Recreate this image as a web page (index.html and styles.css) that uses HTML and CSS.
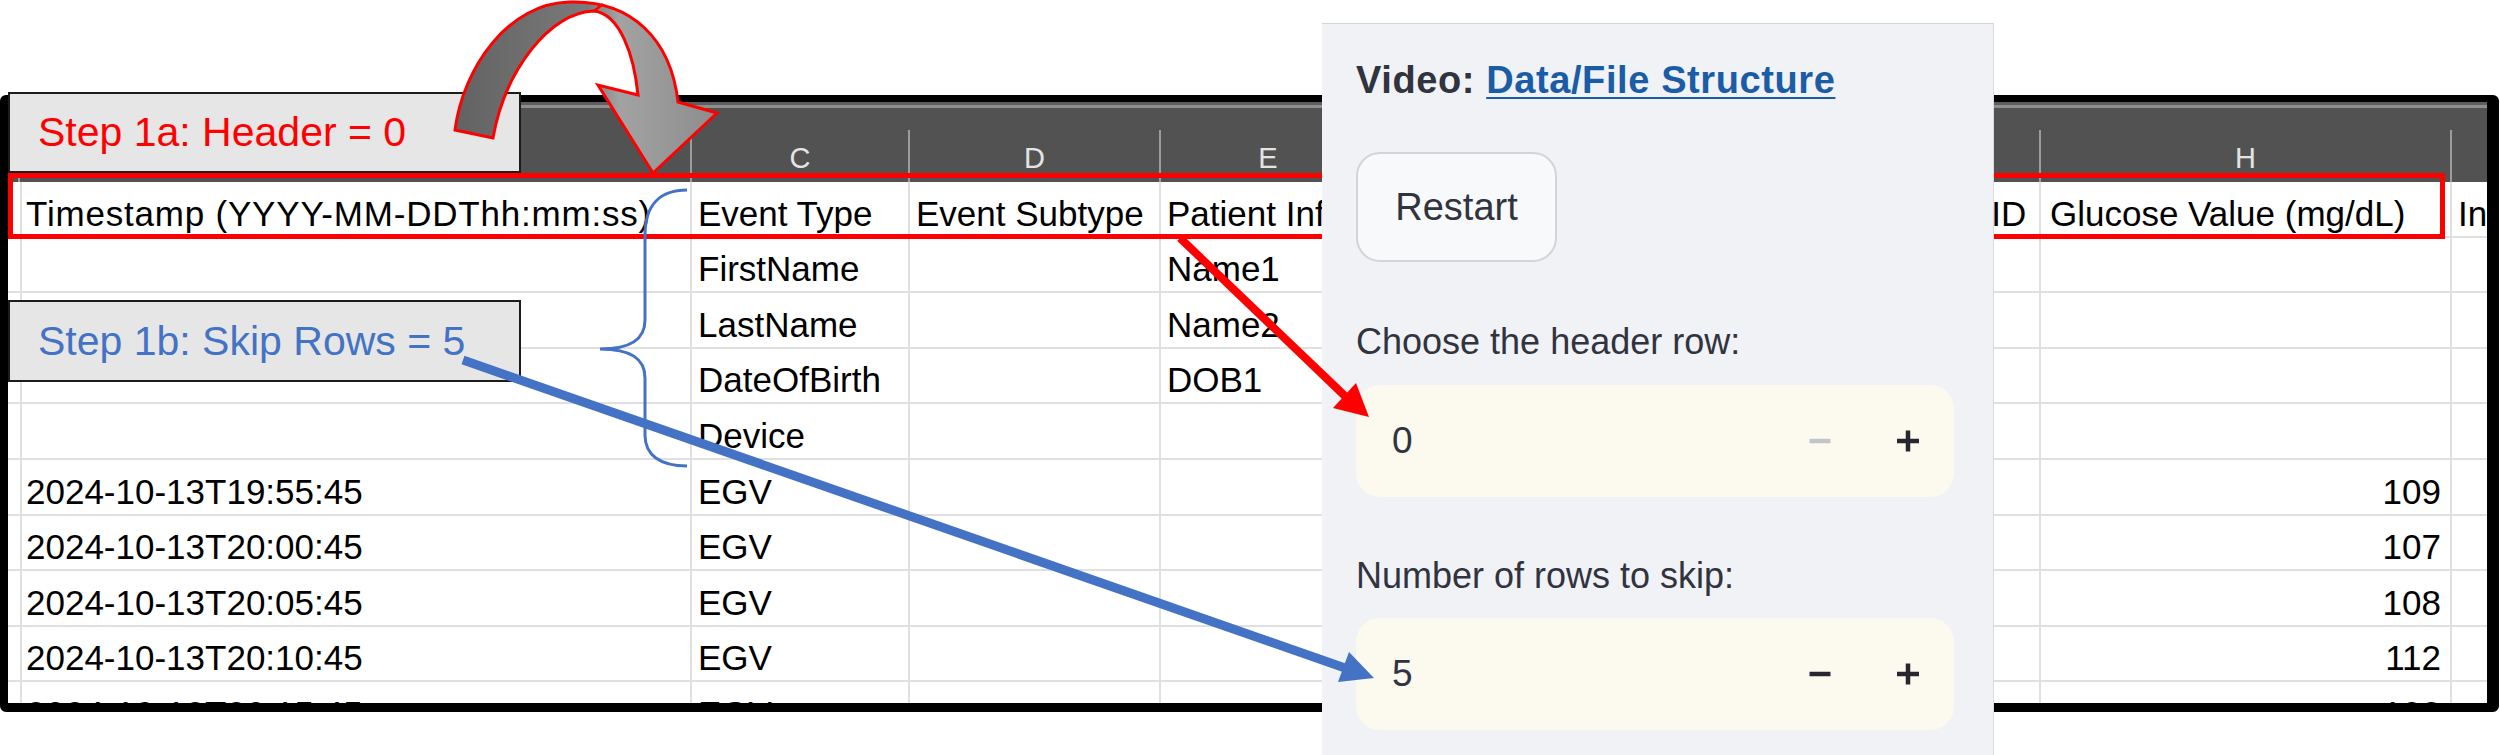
FILE: index.html
```html
<!DOCTYPE html>
<html lang="en">
<head>
<meta charset="utf-8">
<title>Header and skip rows</title>
<link rel="stylesheet" href="styles.css">
</head>
<body>
  <div class="sheet">
    <div class="colbar">
      <div class="col-letter"></div>
      <div class="col-letter">B</div>
      <div class="col-letter">C</div>
      <div class="col-letter">D</div>
      <div class="col-letter">E</div>
      <div class="col-letter">F</div>
      <div class="col-letter">G</div>
      <div class="col-letter">H</div>
      <div class="col-letter">I</div>
    </div>
    <div class="rows">
      <div class="row">
        <div class="cell"></div>
        <div class="cell stamp-head">Timestamp (YYYY-MM-DDThh:mm:ss)</div>
        <div class="cell">Event Type</div>
        <div class="cell">Event Subtype</div>
        <div class="cell">Patient Info</div>
        <div class="cell">Device Info</div>
        <div class="cell">Source Device ID</div>
        <div class="cell head-h">Glucose Value (mg/dL)</div>
        <div class="cell">Insulin Value (u)</div>
      </div>
      <div class="row">
        <div class="cell"></div><div class="cell"></div>
        <div class="cell">FirstName</div><div class="cell"></div>
        <div class="cell">Name1</div><div class="cell"></div><div class="cell"></div>
        <div class="cell num"></div><div class="cell"></div>
      </div>
      <div class="row">
        <div class="cell"></div><div class="cell"></div>
        <div class="cell">LastName</div><div class="cell"></div>
        <div class="cell">Name2</div><div class="cell"></div><div class="cell"></div>
        <div class="cell num"></div><div class="cell"></div>
      </div>
      <div class="row">
        <div class="cell"></div><div class="cell"></div>
        <div class="cell">DateOfBirth</div><div class="cell"></div>
        <div class="cell">DOB1</div><div class="cell"></div><div class="cell"></div>
        <div class="cell num"></div><div class="cell"></div>
      </div>
      <div class="row">
        <div class="cell"></div><div class="cell"></div>
        <div class="cell">Device</div><div class="cell"></div>
        <div class="cell"></div><div class="cell"></div><div class="cell"></div>
        <div class="cell num"></div><div class="cell"></div>
      </div>
      <div class="row">
        <div class="cell"></div><div class="cell">2024-10-13T19:55:45</div>
        <div class="cell">EGV</div><div class="cell"></div>
        <div class="cell"></div><div class="cell"></div><div class="cell"></div>
        <div class="cell num">109</div><div class="cell"></div>
      </div>
      <div class="row">
        <div class="cell"></div><div class="cell">2024-10-13T20:00:45</div>
        <div class="cell">EGV</div><div class="cell"></div>
        <div class="cell"></div><div class="cell"></div><div class="cell"></div>
        <div class="cell num">107</div><div class="cell"></div>
      </div>
      <div class="row">
        <div class="cell"></div><div class="cell">2024-10-13T20:05:45</div>
        <div class="cell">EGV</div><div class="cell"></div>
        <div class="cell"></div><div class="cell"></div><div class="cell"></div>
        <div class="cell num">108</div><div class="cell"></div>
      </div>
      <div class="row">
        <div class="cell"></div><div class="cell">2024-10-13T20:10:45</div>
        <div class="cell">EGV</div><div class="cell"></div>
        <div class="cell"></div><div class="cell"></div><div class="cell"></div>
        <div class="cell num">112</div><div class="cell"></div>
      </div>
      <div class="row">
        <div class="cell"></div><div class="cell">2024-10-13T20:15:45</div>
        <div class="cell">EGV</div><div class="cell"></div>
        <div class="cell"></div><div class="cell"></div><div class="cell"></div>
        <div class="cell num">108</div><div class="cell"></div>
      </div>
    </div>
  </div>

  <div class="header-frame"></div>

  <div class="callout callout-header">Step 1a: Header = 0</div>
  <div class="callout callout-skip">Step 1b: Skip Rows = 5</div>

  <aside class="sidebar">
    <p class="sidebar-title">Video: <a class="video-link" href="#">Data/File Structure</a></p>
    <button class="restart" type="button">Restart</button>

    <label class="field-label">Choose the header row:</label>
    <div class="number-input">
      <span class="number-value">0</span>
      <span class="stepper is-disabled">
        <svg width="24" height="24" viewBox="0 0 24 24"><path d="M1.5 12H22.5" /></svg>
      </span>
      <span class="stepper">
        <svg width="24" height="24" viewBox="0 0 24 24"><path d="M1 12H23M12 1.5V22.5" /></svg>
      </span>
    </div>

    <label class="field-label">Number of rows to skip:</label>
    <div class="number-input">
      <span class="number-value">5</span>
      <span class="stepper">
        <svg width="24" height="24" viewBox="0 0 24 24"><path d="M1.5 12H22.5" /></svg>
      </span>
      <span class="stepper">
        <svg width="24" height="24" viewBox="0 0 24 24"><path d="M1 12H23M12 1.5V22.5" /></svg>
      </span>
    </div>
  </aside>

  <svg class="annotations" width="2500" height="755" viewBox="0 0 2500 755">
    <defs>
      <linearGradient id="ribbon" x1="455" y1="0" x2="720" y2="0" gradientUnits="userSpaceOnUse">
        <stop offset="0" stop-color="#626262"/>
        <stop offset="0.5" stop-color="#7a7a7a"/>
        <stop offset="0.62" stop-color="#a2a2a2"/>
        <stop offset="1" stop-color="#8c8c8c"/>
      </linearGradient>
    </defs>

    <!-- curved arrow pointing at the header row -->
    <path class="curl" d="M455,130 C463,68 508,3 570,2 C632,0 671,40 678,102 L717,113 L653,173 L598,85 L638,95 C634,55 620,14 594,11 C550,12 505,70 493,138 Z"/>
    <path class="curl-seam" d="M594,11 L603,4"/>

    <!-- brace around the rows to skip -->
    <path class="brace" d="M687,190 C660,190 645,205 645,235 L645,320 C645,340 630,349 600,349 C630,349 645,358 645,378 L645,435 C645,455 660,466 687,466"/>

    <!-- header row pointer -->
    <line class="pointer-red" x1="1180" y1="238" x2="1346" y2="397"/>
    <polygon class="head-red" points="1369,417 1333,408 1356,383"/>

    <!-- skip rows pointer -->
    <line class="pointer-blue" x1="463" y1="360" x2="1345" y2="668"/>
    <polygon class="head-blue" points="1374,678 1338,682 1349,652"/>
  </svg>
</body>
</html>
```

FILE: styles.css
```css
html, body {
  margin: 0;
  padding: 0;
}

body {
  position: relative;
  width: 2500px;
  height: 755px;
  overflow: hidden;
  background: #ffffff;
  font-family: "Liberation Sans", Arial, sans-serif;
}

/* ---------- spreadsheet ---------- */

.sheet {
  margin-top: 95px;
  width: 2499px;
  height: 617px;
  box-sizing: border-box;
  border-style: solid;
  border-color: #000000;
  border-width: 7px 12px 9px 8px;
  border-radius: 6px;
  overflow: hidden;
  background: #ffffff;
}

.colbar,
.row {
  display: grid;
  grid-template-columns: 12px 672px 218px 251px 216px 371px 293px 411px 200px;
  width: max-content;
}

.colbar {
  height: 80px;
  align-items: end;
  background: linear-gradient(#5e5e5e 0, #5e5e5e 3px, #8e8e8e 3px, #8e8e8e 6px, #525252 6px);
}

.col-letter {
  height: 52px;
  box-sizing: border-box;
  border-right: 2px solid #9c9c9c;
  display: flex;
  justify-content: center;
  align-items: flex-end;
  padding-bottom: 9px;
  color: #e4e4e4;
  font-size: 29px;
  line-height: 1;
}

.row {
  height: 55.6px;
}

.cell {
  box-sizing: border-box;
  border-right: 2px solid #e0e0e0;
  border-bottom: 2px solid #e0e0e0;
  display: flex;
  align-items: flex-end;
  padding: 0 6px 2px 6px;
  font-size: 35px;
  line-height: 40px;
  color: #000000;
  white-space: nowrap;
}

.cell.stamp-head {
  letter-spacing: 0.8px;
}

.cell.num {
  justify-content: flex-end;
  padding-right: 9px;
}

.cell.head-h {
  padding-left: 9px;
}

/* ---------- annotations ---------- */

.header-frame {
  position: absolute;
  left: 8px;
  top: 173px;
  width: 2437px;
  height: 66px;
  box-sizing: border-box;
  border: 5px solid #ff0000;
  z-index: 1;
}

.callout {
  position: absolute;
  left: 8px;
  width: 513px;
  box-sizing: border-box;
  background: #e6e6e6;
  border: 2px solid #1c1c1c;
  display: flex;
  align-items: center;
  padding-left: 28px;
  font-size: 41px;
  white-space: nowrap;
  z-index: 2;
}

.callout-header {
  top: 92px;
  height: 81px;
  color: #ff0000;
}

.callout-skip {
  top: 300px;
  height: 82px;
  color: #4472c4;
}

.annotations {
  position: absolute;
  left: 0;
  top: 0;
  z-index: 4;
  pointer-events: none;
}

.curl {
  fill: url(#ribbon);
  stroke: #ff0000;
  stroke-width: 3;
  stroke-linejoin: miter;
}

.curl-seam {
  stroke: #ff0000;
  stroke-width: 2.5;
  fill: none;
}

.brace {
  fill: none;
  stroke: #4472c4;
  stroke-width: 3;
}

.pointer-red {
  stroke: #ff0000;
  stroke-width: 8;
}

.head-red {
  fill: #ff0000;
}

.pointer-blue {
  stroke: #4472c4;
  stroke-width: 9;
}

.head-blue {
  fill: #4472c4;
}

/* ---------- settings sidebar ---------- */

.sidebar {
  position: absolute;
  left: 1322px;
  top: 23px;
  width: 672px;
  height: 740px;
  box-sizing: border-box;
  padding: 33px 0 0 34px;
  background: #f0f2f6;
  border-top: 1px solid #d4d5d9;
  border-right: 1px solid #dadbdf;
  display: flex;
  flex-direction: column;
  align-items: flex-start;
  color: #31333f;
  z-index: 3;
}

.sidebar-title {
  margin: 0;
  font-size: 38px;
  line-height: 46px;
  font-weight: 700;
  letter-spacing: 0.6px;
  white-space: nowrap;
}

.video-link {
  color: #1a5ca6;
  text-decoration: underline;
  text-decoration-thickness: 2px;
  text-underline-offset: 4px;
}

.restart {
  margin-top: 49px;
  width: 201px;
  height: 110px;
  box-sizing: border-box;
  background: #f8f9fb;
  border: 2px solid #d3d4d8;
  border-radius: 24px;
  font-family: "Liberation Sans", Arial, sans-serif;
  font-size: 38px;
  color: #31333f;
  padding: 0;
}

.field-label {
  margin-top: 58px;
  font-size: 36px;
  line-height: 43px;
  color: #31333f;
  white-space: nowrap;
}

.number-input + .field-label {
  margin-top: 57px;
}

.number-input {
  margin-top: 22px;
  width: 598px;
  height: 112px;
  box-sizing: border-box;
  background: #fcf9ef;
  border-radius: 24px;
  display: flex;
  align-items: center;
  padding: 0 2px 0 36px;
}

.number-input:last-child {
  margin-top: 21px;
}

.number-value {
  flex: 1;
  font-size: 37px;
  color: #31333f;
}

.stepper {
  width: 88px;
  display: flex;
  justify-content: center;
  align-items: center;
}

.stepper svg path {
  fill: none;
  stroke: #262730;
  stroke-width: 4.5;
}

.stepper.is-disabled svg path {
  stroke: #c3c4c8;
}
```
